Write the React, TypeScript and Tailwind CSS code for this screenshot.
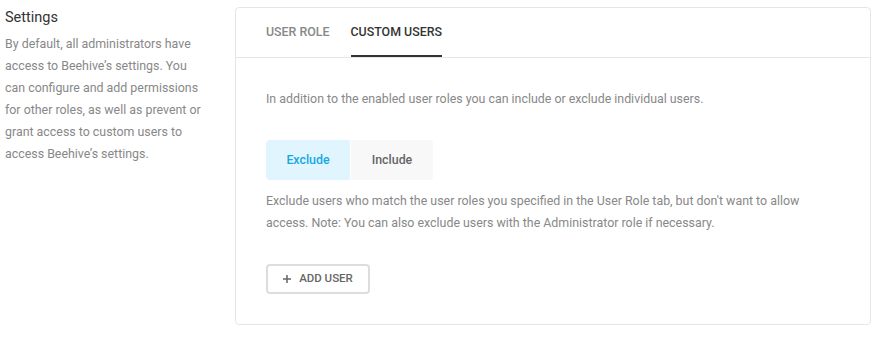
import { useState } from "react";

type Mode = "exclude" | "include";

export default function App() {
  const [tab, setTab] = useState<"role" | "custom">("custom");
  const [mode, setMode] = useState<Mode>("exclude");

  return (
    <div className="flex min-h-[351px] bg-white font-['Roboto',sans-serif] antialiased">
      <div className="w-[235px] shrink-0 pl-[5px] pr-[28px] pt-[8px]">
        <h2 className="text-[14.5px] leading-[20px] font-normal text-[#333]">Settings</h2>
        <p className="mt-[5px] text-[12.4px] leading-[22px] text-[#888]">
          By default, all administrators have access to Beehive’s settings. You
          can configure and add permissions for other roles, as well as prevent or
          grant access to custom users to access Beehive’s settings.
        </p>
      </div>

      <div className="mt-[7px] mr-[6px] mb-auto flex-1 rounded-[4px] border border-[#e6e6e6] bg-white">
        <div className="flex gap-[21px] border-b border-[#e6e6e6] px-[30px]">
          <button
            type="button"
            className={`h-[49px] border-b-2 pt-[2px] text-[12.4px] font-medium ${
              tab === "role" ? "border-[#333] text-[#333]" : "border-transparent text-[#888]"
            }`}
            onClick={() => setTab("role")}
          >
            USER ROLE
          </button>
          <button
            type="button"
            className={`h-[49px] border-b-2 pt-[2px] text-[12.4px] font-medium ${
              tab === "custom" ? "border-[#333] text-[#333]" : "border-transparent text-[#888]"
            }`}
            onClick={() => setTab("custom")}
          >
            CUSTOM USERS
          </button>
        </div>

        <div className="px-[30px] pt-[30px] pb-[30px]">
          <p className="text-[12.4px] leading-[22px] text-[#888]">
            In addition to the enabled user roles you can include or exclude individual users.
          </p>

          <div className="mt-[30px] flex gap-px">
            <button
              type="button"
              className={`h-[40px] w-[84px] rounded-l-[4px] text-[12.4px] font-medium ${
                mode === "exclude" ? "bg-[#e1f5fe] text-[#17a8e3]" : "bg-[#f8f8f8] text-[#666]"
              }`}
              onClick={() => setMode("exclude")}
            >
              Exclude
            </button>
            <button
              type="button"
              className={`h-[40px] w-[82px] rounded-r-[4px] text-[12.4px] font-medium ${
                mode === "include" ? "bg-[#e1f5fe] text-[#17a8e3]" : "bg-[#f8f8f8] text-[#666]"
              }`}
              onClick={() => setMode("include")}
            >
              Include
            </button>
          </div>

          <p className="mt-[10px] max-w-[545px] text-[12.4px] leading-[22px] text-[#888]">
            Exclude users who match the user roles you specified in the User Role tab, but don't
            want to allow access. Note: You can also exclude users with the Administrator role if
            necessary.
          </p>

          <button
            type="button"
            className="mt-[30px] flex h-[30px] w-[104px] items-center justify-center gap-[8px] rounded-[4px] border-2 border-[#ddd] text-[11.5px] font-medium text-[#666]"
          >
            <svg width="8" height="8" viewBox="0 0 8 8" className="text-[#666]">
              <path d="M4 0v8M0 4h8" stroke="currentColor" strokeWidth="1.5" />
            </svg>
            ADD USER
          </button>
        </div>
      </div>
    </div>
  );
}
